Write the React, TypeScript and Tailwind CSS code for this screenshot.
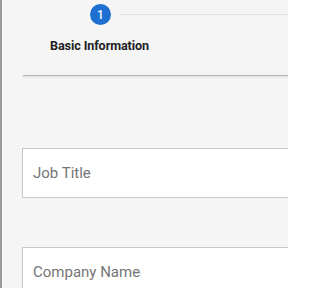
export default function App() {
  return (
    <div
      className="w-[288px] h-[288px] overflow-hidden flex bg-[#f5f5f5]"
      style={{ fontFamily: "Roboto, 'Liberation Sans', sans-serif" }}
    >
      <div className="w-[2px] shrink-0 bg-[#9a9a9a]" />
      <div className="flex-1 pl-[20px] min-w-0">
        {/* stepper header */}
        <div className="h-[75px] -mr-[40px] pt-[4px]">
          <div className="flex items-center pl-[68px]">
            <div className="w-[21px] h-[21px] shrink-0 rounded-full bg-[#1e6fd0] text-white text-[12px] font-medium flex items-center justify-center">
              1
            </div>
            <div className="flex-1 h-px bg-[#e0e0e0] ml-[9px]" />
          </div>
          <div className="mt-[12px] pl-[28px] text-[12.6px] font-bold text-[#222] tracking-[-0.1px]">
            Basic Information
          </div>
        </div>
        <div className="h-px ml-[1px] bg-[#b5b5b5] shadow-[0_1px_2px_rgba(0,0,0,0.15)] -mr-[40px]" />

        {/* form */}
        <div className="pt-[72px] flex flex-col gap-[49px] -mr-[40px]">
          <div className="h-[50px] bg-white border border-[#c8c8c8] flex items-center pl-[10px] text-[15px] text-[#757575]">
            Job Title
          </div>
          <div className="h-[50px] bg-white border border-[#c8c8c8] flex items-center pl-[10px] text-[15px] text-[#757575]">
            Company Name
          </div>
        </div>
      </div>
    </div>
  );
}
